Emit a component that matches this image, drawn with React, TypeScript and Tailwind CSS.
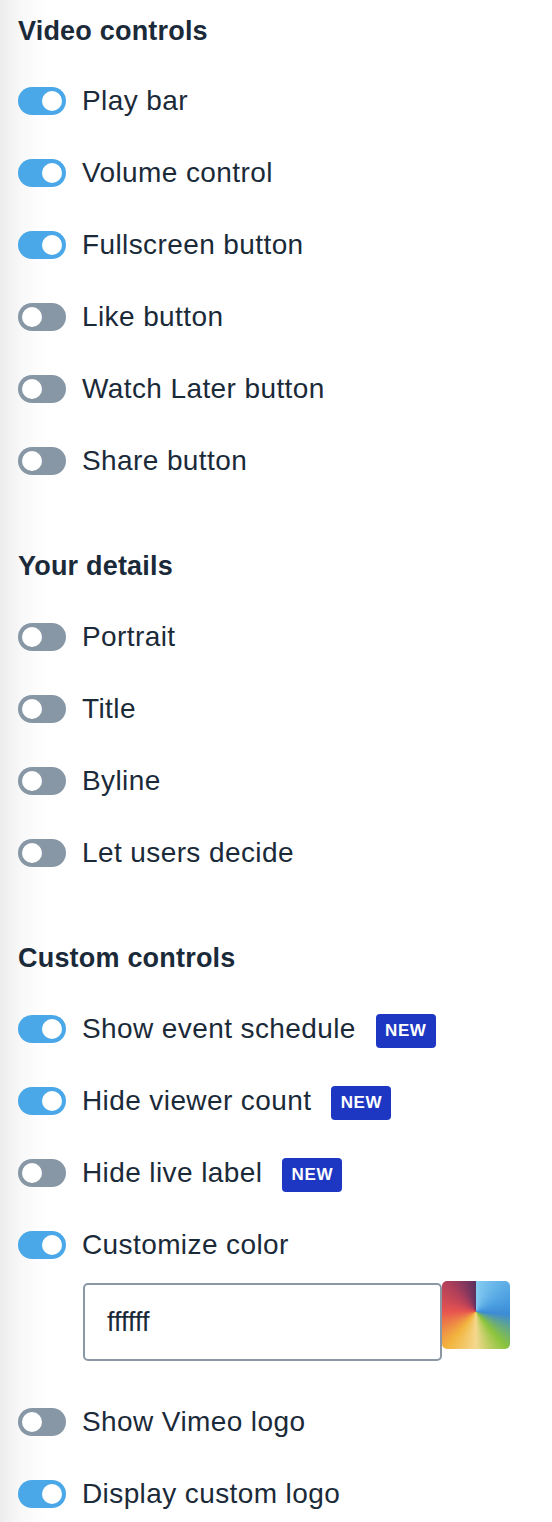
import React from 'react'

type Item = { label: string; on: boolean; isNew?: boolean }

const videoControls: Item[] = [
  { label: 'Play bar', on: true },
  { label: 'Volume control', on: true },
  { label: 'Fullscreen button', on: true },
  { label: 'Like button', on: false },
  { label: 'Watch Later button', on: false },
  { label: 'Share button', on: false },
]

const yourDetails: Item[] = [
  { label: 'Portrait', on: false },
  { label: 'Title', on: false },
  { label: 'Byline', on: false },
  { label: 'Let users decide', on: false },
]

function Toggle({ on }: { on: boolean }) {
  return (
    <div
      className={`relative w-[48px] h-[28px] rounded-full shrink-0 ${on ? 'bg-[#4ba8e8]' : 'bg-[#8797a5]'}`}
    >
      <div
        className={`absolute top-[4px] w-[20px] h-[20px] rounded-full bg-white ${on ? 'left-[24px]' : 'left-[4px]'}`}
      />
    </div>
  )
}

function NewBadge() {
  return (
    <span className="ml-[20px] inline-flex items-center justify-center w-[60px] h-[34px] mt-[4px] rounded-[4px] bg-[#1d37c2] text-white text-[17px] font-bold tracking-[0.6px]">
      NEW
    </span>
  )
}

function Row({ item }: { item: Item }) {
  return (
    <div className="flex items-center h-[28px]">
      <Toggle on={item.on} />
      <span className="ml-[16px] text-[28px] leading-[28px] tracking-[0.4px] text-[#1b2a39] whitespace-nowrap">
        {item.label}
      </span>
      {item.isNew && <NewBadge />}
    </div>
  )
}

function Heading({ children }: { children: React.ReactNode }) {
  return <h2 className="text-[27px] leading-[32px] font-bold tracking-[0.2px] text-[#1b2a39]">{children}</h2>
}

export default function App() {
  return (
    <div
      className="w-[552px] min-h-[1522px] bg-[linear-gradient(to_right,#ececec_0px,#f8f8f8_20px,#ffffff_48px)] pl-[18px] pt-[15px] font-['Liberation_Sans',Arial,sans-serif]"
    >
      <Heading>Video controls</Heading>
      <div className="flex flex-col gap-[44px] mt-[40px]">
        {videoControls.map((item) => (
          <Row key={item.label} item={item} />
        ))}
      </div>

      <div className="mt-[75px]">
        <Heading>Your details</Heading>
      </div>
      <div className="flex flex-col gap-[44px] mt-[41px]">
        {yourDetails.map((item) => (
          <Row key={item.label} item={item} />
        ))}
      </div>

      <div className="mt-[75px]">
        <Heading>Custom controls</Heading>
      </div>
      <div className="flex flex-col gap-[44px] mt-[41px]">
        <Row item={{ label: 'Show event schedule', on: true, isNew: true }} />
        <Row item={{ label: 'Hide viewer count', on: true, isNew: true }} />
        <Row item={{ label: 'Hide live label', on: false, isNew: true }} />
        <div>
          <Row item={{ label: 'Customize color', on: true }} />
          {/* champ couleur + pastille */}
          <div className="flex items-start ml-[65px] mt-[24px]">
            <div className="w-[359px] h-[78px] border-2 border-[#8a98a6] rounded-[5px] bg-white flex items-center pl-[22px]">
              <span className="text-[27px] text-[#1b2a39]">ffffff</span>
            </div>
            <div className="w-[68px] h-[68px] -mt-[2px] rounded-[5px] bg-[conic-gradient(from_0deg_at_50%_45%,#86cdf2_0deg,#4a9ee0_70deg,#3d8bd4_95deg,#8bc43c_140deg,#f4d88e_180deg,#f2b43e_220deg,#e8544f_270deg,#b03f5a_315deg,#5a2f5f_360deg)]" />
          </div>
        </div>
      </div>
      <div className="flex flex-col gap-[44px] mt-[47px]">
        <Row item={{ label: 'Show Vimeo logo', on: false }} />
        <Row item={{ label: 'Display custom logo', on: true }} />
      </div>
    </div>
  )
}
